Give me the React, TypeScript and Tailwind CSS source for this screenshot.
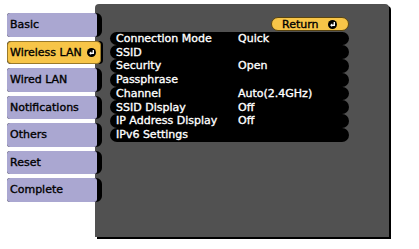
import React from "react";

function EnterIcon({ size = 9 }: { size?: number }) {
  return (
    <svg width={size} height={size} viewBox="0 0 10 10" className="shrink-0">
      <circle cx="5" cy="5" r="5" fill="#000" />
      <path d="M7 2.3 V5.8 H4" stroke="#fff" strokeWidth="1.5" fill="none" />
      <path d="M4.6 3.7 L2.3 5.8 L4.6 7.9 Z" fill="#fff" />
    </svg>
  );
}

const tabs = [
  "Basic",
  "Wireless LAN",
  "Wired LAN",
  "Notifications",
  "Others",
  "Reset",
  "Complete",
];

const rows: [string, string][] = [
  ["Connection Mode", "Quick"],
  ["SSID", ""],
  ["Security", "Open"],
  ["Passphrase", ""],
  ["Channel", "Auto(2.4GHz)"],
  ["SSID Display", "Off"],
  ["IP Address Display", "Off"],
  ["IPv6 Settings", ""],
];

export default function App() {
  return (
    <div
      className="flex w-[419px] h-[249px] bg-white text-[11px] leading-none overflow-hidden [-webkit-text-stroke:0.35px]"
      style={{ fontFamily: '"DejaVu Sans", sans-serif' }}
    >
      <div className="relative z-10 flex flex-col gap-[4px] pt-[13px] pl-[7px] w-[103px] shrink-0">
        {tabs.map((t) =>
          t === "Wireless LAN" ? (
            <div key={t} className="flex h-[23.5px] w-[96px] rounded-[4px] bg-black">
              <div className="flex flex-1 mr-[2px] items-center justify-between rounded-[4px] border border-[#9a7a2a] bg-[#f7c548] pl-[2px] pr-[4px] text-black">
                <span>{t}</span>
                <EnterIcon />
              </div>
            </div>
          ) : (
            <div key={t} className="flex h-[23.5px] w-[95px] rounded-l-[3px] rounded-r-[6px] bg-black">
              <div className="flex flex-1 mr-[5px] items-center rounded-[3px] bg-[#aaa7d1] pl-[3px] text-black">
                <span>{t}</span>
              </div>
            </div>
          )
        )}
      </div>
      <div className="ml-[-8px] mt-[4px] flex flex-col w-[294px] h-[233px] shrink-0 rounded-t-[4px] bg-[#515151] shadow-[2px_2px_0_#000] pl-[15px] pr-[40px]">
        <div className="flex justify-end pt-[13px]">
          <div className="flex h-[14px] w-[78px] items-center rounded-full border border-[#5a4510] bg-[#f7c548] pl-[10px] pr-[11px] text-black">
            <span>Return</span>
            <span className="ml-auto">
              <EnterIcon />
            </span>
          </div>
        </div>
        <div className="mt-[0.5px] flex flex-col">
          {rows.map(([k, v]) => (
            <div key={k} className="flex h-[13.75px] items-center rounded-full bg-black pl-[6px] text-white">
              <span className="w-[122px] shrink-0 whitespace-nowrap">{k}</span>
              <span className="whitespace-nowrap">{v}</span>
            </div>
          ))}
        </div>
      </div>
    </div>
  );
}
